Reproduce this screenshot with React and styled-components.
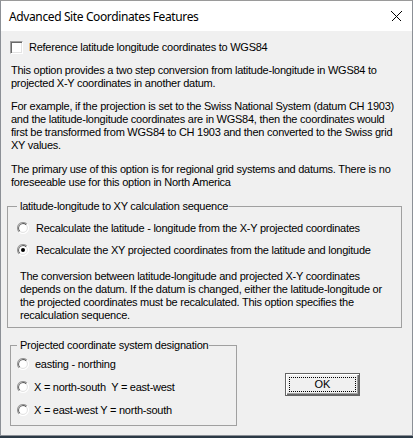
import React from "react";
import styled, { createGlobalStyle } from "styled-components";

const Global = createGlobalStyle`
  html, body { margin: 0; padding: 0; }
  body { background: #2c3a46; width: 413px; height: 438px; overflow: hidden; }
`;

const Window = styled.div`
  width: 413px;
  height: 436px;
  box-sizing: border-box;
  border: 1px solid #8c9096;
  border-top-color: #9a9a9a;
  background: #f0f0f0;
  display: flex;
  flex-direction: column;
  font-family: "Liberation Sans", Arial, sans-serif;
  font-size: 11px;
  letter-spacing: -0.25px;
  color: #000;
`;

const TitleBar = styled.div`
  height: 30px;
  background: #fff;
  display: flex;
  align-items: center;
  justify-content: space-between;
  padding: 0 10px 0 8px;
  flex-shrink: 0;
`;

const Title = styled.span`
  font-family: "Noto Sans", "Open Sans", sans-serif;
  font-size: 12px;
  letter-spacing: -0.38px;
  color: #000;
  margin-top: 1px;
`;

const CloseIcon = () => (
  <svg width="11" height="11" viewBox="0 0 11 11" style={{ display: "block", marginTop: 1 }}>
    <path d="M0.5 0.5 L10.5 10.5 M10.5 0.5 L0.5 10.5" stroke="#000" strokeWidth="1" shapeRendering="crispEdges" />
  </svg>
);

const Body = styled.div`
  display: flex;
  flex-direction: column;
  padding: 10px 0 0 9px;
`;

const CheckRow = styled.label`
  display: flex;
  align-items: center;
  gap: 6px;
  height: 13px;
  line-height: 13px;
  white-space: nowrap;
`;

const CheckBox = styled.span`
  display: block;
  width: 13px;
  height: 13px;
  box-sizing: border-box;
  background: #fff;
  border-top: 1px solid #a0a0a0;
  border-left: 1px solid #a0a0a0;
  border-bottom: 1px solid #fff;
  border-right: 1px solid #fff;
  box-shadow: inset 1px 1px #696969, inset -1px -1px #e3e3e3;
  flex-shrink: 0;
`;

const Para = styled.p`
  margin: ${(p) => p.$top ?? 10}px 0 0 ${(p) => p.$left ?? 1}px;
  line-height: 13px;
  white-space: nowrap;
`;

const Group = styled.fieldset`
  margin: ${(p) => p.$top}px 0 0 ${(p) => p.$left}px;
  width: ${(p) => p.$width}px;
  box-sizing: border-box;
  border: 1px solid #a0a0a0;
  padding: 0 0 ${(p) => p.$bottom}px ${(p) => p.$padLeft}px;
  min-width: 0;
`;

const Legend = styled.legend`
  padding: 0 1px 0 3px;
  line-height: 13px;
  white-space: nowrap;
`;

const RadioRow = styled.label`
  display: flex;
  align-items: center;
  gap: ${(p) => p.$gap}px;
  height: 12px;
  line-height: 13px;
  margin-top: ${(p) => p.$top}px;
  white-space: nowrap;
`;

const RadioText = styled.span`
  margin-top: ${(p) => p.$shift ?? 0}px;
`;

const Radio = ({ checked }) => (
  <svg width="12" height="12" viewBox="0 0 12 12" style={{ display: "block", flexShrink: 0 }}>
    <path d="M2.1 9.9 A5.5 5.5 0 0 1 9.9 2.1" fill="none" stroke="#9a9a9a" strokeWidth="1.1" />
    <path d="M9.9 2.1 A5.5 5.5 0 0 1 2.1 9.9" fill="none" stroke="#ffffff" strokeWidth="1.1" />
    <path d="M2.9 9.1 A4.4 4.4 0 0 1 9.1 2.9" fill="none" stroke="#5a5a5a" strokeWidth="1.1" />
    <path d="M9.1 2.9 A4.4 4.4 0 0 1 2.9 9.1" fill="none" stroke="#e3e3e3" strokeWidth="1.1" />
    <circle cx="6" cy="6" r="3.8" fill="#fff" />
    {checked && <circle cx="6" cy="6" r="2" fill="#000" />}
  </svg>
);

const BottomRow = styled.div`
  display: flex;
  align-items: flex-start;
`;

const OkButton = styled.button`
  margin: 45px 0 0 48px;
  width: 75px;
  height: 23px;
  box-sizing: border-box;
  border: 1px solid #646464;
  background: #f0f0f0;
  box-shadow: inset 1px 1px #fff, inset -1px -1px #696969, inset -2px -2px #a0a0a0;
  font-family: "Liberation Sans", Arial, sans-serif;
  font-size: 11px;
  color: #000;
  padding: 0;
  outline: 1px dotted #000;
  outline-offset: -5px;
  line-height: 13px;
`;

export default function App() {
  return (
    <>
      <Global />
      <Window>
        <TitleBar>
          <Title>Advanced Site Coordinates Features</Title>
          <CloseIcon />
        </TitleBar>
        <Body>
          <CheckRow>
            <CheckBox />
            <span>Reference latitude longitude coordinates to WGS84</span>
          </CheckRow>
          <Para>
            This option provides a two step conversion from latitude-longitude in WGS84 to
            <br />
            projected X-Y coordinates in another datum.
          </Para>
          <Para>
            For example, if the projection is set to the Swiss National System (datum CH 1903)
            <br />
            and the latitude-longitude coordinates are in WGS84, then the coordinates would
            <br />
            first be transformed from WGS84 to CH 1903 and then converted to the Swiss grid
            <br />
            XY values.
          </Para>
          <Para $top={11}>
            The primary use of this option is for regional grid systems and datums. There is no
            <br />
            foreseeable use for this option in North America
          </Para>
          <Group $top={11} $left={-3} $width={395} $padLeft={9} $bottom={5}>
            <Legend>latitude-longitude to XY calculation sequence</Legend>
            <RadioRow $top={9} $gap={7}>
              <Radio />
              <RadioText>Recalculate the latitude - longitude from the X-Y projected coordinates</RadioText>
            </RadioRow>
            <RadioRow $top={10} $gap={7}>
              <Radio checked />
              <RadioText $shift={1}>Recalculate the XY projected coordinates from the latitude and longitude</RadioText>
            </RadioRow>
            <Para $top={14} $left={3}>
              The conversion between latitude-longitude and projected X-Y coordinates
              <br />
              depends on the datum. If the datum is changed, either the latitude-longitude or
              <br />
              the projected coordinates must be recalculated. This option specifies the
              <br />
              recalculation sequence.
            </Para>
          </Group>
          <BottomRow>
            <Group $top={11} $left={0} $width={227} $padLeft={6} $bottom={9}>
              <Legend>Projected coordinate system designation</Legend>
              <RadioRow $top={6} $gap={6}>
                <Radio />
                <RadioText>easting - northing</RadioText>
              </RadioRow>
              <RadioRow $top={11} $gap={5}>
                <Radio />
                <RadioText>X = north-south&nbsp; Y = east-west</RadioText>
              </RadioRow>
              <RadioRow $top={11} $gap={5}>
                <Radio />
                <RadioText>X = east-west Y = north-south</RadioText>
              </RadioRow>
            </Group>
            <OkButton>OK</OkButton>
          </BottomRow>
        </Body>
      </Window>
    </>
  );
}
